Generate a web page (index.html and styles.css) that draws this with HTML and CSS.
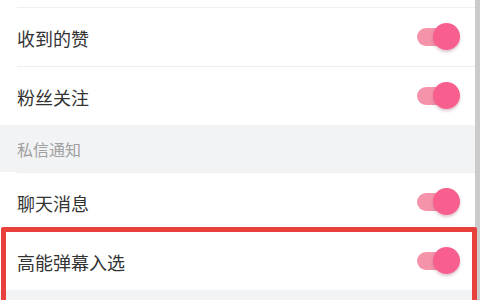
FILE: index.html
```html
<!DOCTYPE html>
<html lang="zh">
<head>
<meta charset="utf-8">
<link rel="stylesheet" href="styles.css">
</head>
<body>
<div class="page">
  <div class="screen">
    <div class="top"></div>
    <div class="row first"><span class="label">收到的赞</span><span class="toggle"><span class="track"></span><span class="knob"></span></span></div>
    <div class="row"><span class="label">粉丝关注</span><span class="toggle"><span class="track"></span><span class="knob"></span></span></div>
    <div class="section">私信通知</div>
    <div class="row first"><span class="label">聊天消息</span><span class="toggle"><span class="track"></span><span class="knob"></span></span></div>
    <div class="row"><span class="label">高能弹幕入选</span><span class="toggle"><span class="track"></span><span class="knob"></span></span></div>
    <div class="section"></div>
  </div>
  <div class="scrollbar"></div>
  <div class="highlight"></div>
</div>
</body>
</html>
```
FILE: styles.css
```css
html, body {
  margin: 0;
  padding: 0;
  background: #fff;
  overflow: hidden;
}
.page {
  position: relative;
  display: flex;
  width: 480px;
  height: 300px;
  overflow: hidden;
  font-family: "Noto Sans CJK SC", "Noto Sans", sans-serif;
}
.screen {
  flex: 1;
  display: flex;
  flex-direction: column;
  background: #fff;
}
.scrollbar {
  width: 5px;
  background: #cbcbcb;
}
.top {
  height: 7px;
  flex: none;
}
.row {
  flex: none;
  height: 59px;
  display: flex;
  align-items: center;
  justify-content: space-between;
  padding: 0 15px 0 17px;
  position: relative;
}
.row::before {
  content: "";
  position: absolute;
  top: 0;
  left: 17px;
  right: 0;
  height: 1px;
  background: #ededed;
}
.row.first::before {
  background: #efefef;
}
.label {
  font-size: 18px;
  color: #333;
  line-height: 1;
  padding-top: 2px;
}
.section {
  flex: none;
  height: 47px;
  background: #f2f3f5;
  padding-left: 17px;
  display: flex;
  align-items: center;
  font-size: 16px;
  color: #a0a0a0;
}
.section:last-child {
  flex: 1;
}
.toggle {
  display: flex;
  align-items: center;
  width: 43px;
  height: 27px;
}
.track {
  width: 28px;
  height: 18px;
  border-radius: 9px;
  background: #f593ab;
  flex: none;
}
.knob {
  width: 27px;
  height: 27px;
  border-radius: 50%;
  background: #f85f8e;
  margin-left: -12px;
  flex: none;
  box-shadow: 0 2px 3px rgba(120, 30, 60, 0.25);
}
.highlight {
  position: absolute;
  left: 1px;
  top: 227px;
  width: 466px;
  height: 120px;
  border: 5px solid #e8413d;
  border-radius: 2px;
}
```
